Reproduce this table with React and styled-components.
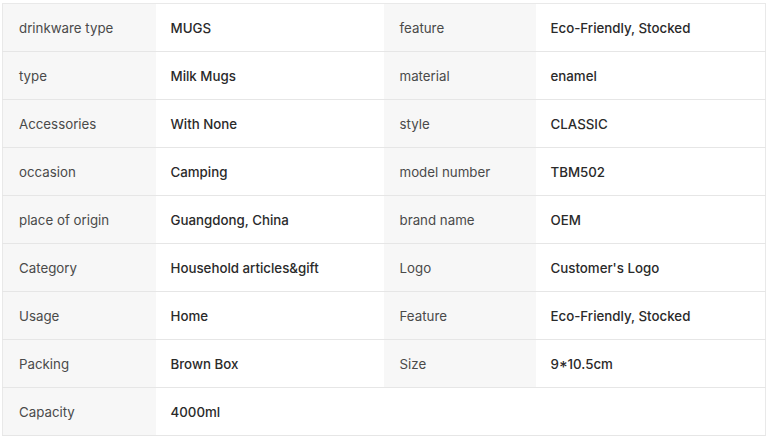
import styled, { createGlobalStyle } from 'styled-components';

const Global = createGlobalStyle`
  body {
    margin: 0;
    background: #fff;
    font-family: Inter, "Noto Sans", sans-serif;
  }
`;

const Wrap = styled.div`
  padding: 3px 3px 0 2px;
`;

const Table = styled.table`
  width: 763px;
  border-collapse: collapse;
  table-layout: fixed;
  border: 1px solid #e9e9e9;
  font-size: 13.3px;
`;

const Row = styled.tr`
  height: 48px;
  border-bottom: 1px solid #e6e6e6;
`;

const Cell = styled.td`
  padding: 0 0 0 ${p => (p.label ? '16px' : '15px')};
  background: ${p => (p.label ? '#f7f7f7' : '#fff')};
  color: ${p => (p.label ? '#4a4a4a' : '#2a2a2a')};
  font-weight: ${p => (p.label ? 400 : 500)};
  vertical-align: middle;
  white-space: nowrap;
`;

const rows = [
  ['drinkware type', 'MUGS', 'feature', 'Eco-Friendly, Stocked'],
  ['type', 'Milk Mugs', 'material', 'enamel'],
  ['Accessories', 'With None', 'style', 'CLASSIC'],
  ['occasion', 'Camping', 'model number', 'TBM502'],
  ['place of origin', 'Guangdong, China', 'brand name', 'OEM'],
  ['Category', 'Household articles&gift', 'Logo', "Customer's Logo"],
  ['Usage', 'Home', 'Feature', 'Eco-Friendly, Stocked'],
  ['Packing', 'Brown Box', 'Size', '9*10.5cm'],
  ['Capacity', '4000ml'],
];

const App = () => {
  return (
    <Wrap>
      <Global />
      <Table>
        <colgroup>
          <col style={{ width: 153 }} />
          <col style={{ width: 228 }} />
          <col style={{ width: 152 }} />
          <col style={{ width: 230 }} />
        </colgroup>
        <tbody>
          {rows.map(([k1, v1, k2, v2]) => (
            <Row key={k1}>
              <Cell label>{k1}</Cell>
              {k2 ? (
                <>
                  <Cell>{v1}</Cell>
                  <Cell label>{k2}</Cell>
                  <Cell>{v2}</Cell>
                </>
              ) : (
                <Cell colSpan={3}>{v1}</Cell>
              )}
            </Row>
          ))}
        </tbody>
      </Table>
    </Wrap>
  );
};

export default App;
